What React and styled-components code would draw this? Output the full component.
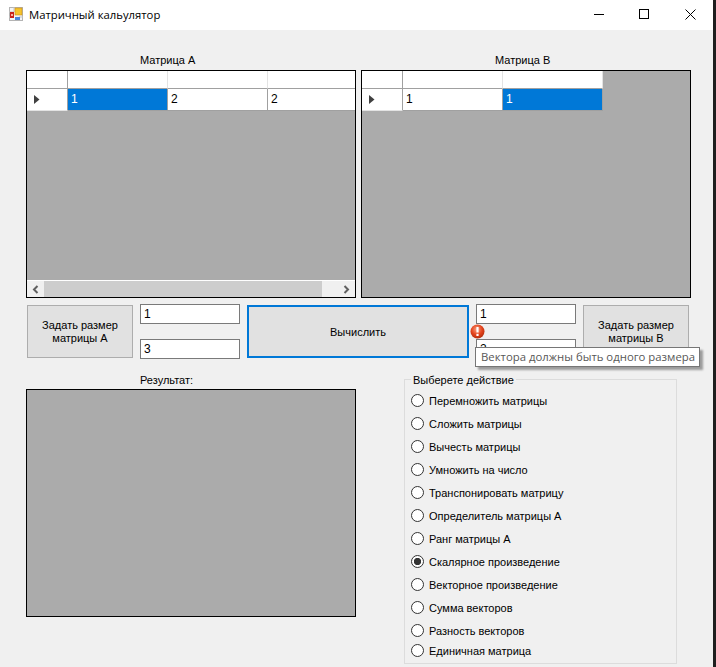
import React from "react";
import styled, { createGlobalStyle } from "styled-components";

const GlobalStyle = createGlobalStyle`
  html, body {
    margin: 0;
    padding: 0;
    background: #1f1f1f;
  }
  * {
    box-sizing: border-box;
  }
`;

const Frame = styled.div`
  width: 713px;
  height: 667px;
  overflow: hidden;
  background: #f0f0f0;
  color: #000;
  font-family: "Liberation Sans", Arial, sans-serif;
  font-size: 11px;
`;

const TitleBar = styled.div`
  height: 30px;
  background: #fff;
  display: flex;
  align-items: center;
  padding: 0 0 2px 9px;
`;

const TitleText = styled.div`
  margin-left: 6px;
  padding-top: 1px;
  font-family: "Open Sans", sans-serif;
  font-size: 11.3px;
  white-space: nowrap;
`;

const WindowControls = styled.div`
  margin-left: auto;
  display: flex;
`;

const WindowControl = styled.div`
  width: ${(p) => (p.$close ? 46 : 45)}px;
  height: 28px;
  padding-left: ${(p) => (p.$close ? 1 : 0)}px;
  display: flex;
  align-items: center;
  justify-content: center;
`;

const Client = styled.div`
  padding: 23px 0 0 26px;
`;

const GridsRow = styled.div`
  display: flex;
  gap: 5px;
`;

const Caption = styled.div`
  height: 14px;
  line-height: 14px;
  margin-left: ${(p) => p.$offset}px;
  margin-bottom: ${(p) => p.$gap}px;
  white-space: nowrap;
`;

const GridPanel = styled.div`
  width: 330px;
  height: 228px;
  background: #ababab;
  border: 1px solid #000;
  display: flex;
  flex-direction: column;
  overflow: hidden;
`;

const HeaderRow = styled.div`
  display: flex;
  flex: none;
  height: 18px;
`;

const DataRow = styled.div`
  display: flex;
  flex: none;
  height: 22px;
`;

const CornerCell = styled.div`
  flex: none;
  width: 41px;
  background: #fff;
  border-right: 1px solid #a0a0a0;
  border-bottom: 1px solid #a0a0a0;
`;

const HeaderCell = styled.div`
  flex: none;
  width: 100px;
  background: #fff;
  border-right: 1px solid #e3e3e3;
  border-bottom: 1px solid #a0a0a0;
`;

const RowHeader = styled.div`
  flex: none;
  width: 41px;
  background: #fff;
  border-right: 1px solid #a0a0a0;
  border-bottom: 1px solid #e3e3e3;
  display: flex;
  align-items: center;
  padding-left: 7px;
`;

const Cell = styled.div`
  flex: none;
  width: 100px;
  background: ${(p) => (p.$selected ? "#0078d7" : "#fff")};
  color: ${(p) => (p.$selected ? "#fff" : "#000")};
  border-right: 1px solid #a0a0a0;
  border-bottom: 1px solid #a0a0a0;
  font-size: 12px;
  line-height: 21px;
  padding-left: 3px;
`;

const GridBody = styled.div`
  flex: 1;
`;

const ScrollBar = styled.div`
  flex: none;
  height: 17px;
  border-top: 1px solid #fff;
  background: #f0f0f0;
  display: flex;
  align-items: center;
`;

const ScrollArrow = styled.div`
  flex: none;
  width: 17px;
  height: 16px;
  display: flex;
  align-items: center;
  justify-content: center;
`;

const ScrollThumb = styled.div`
  flex: 1;
  height: 16px;
  background: #cdcdcd;
  margin-right: ${(p) => p.$trail}px;
`;

const ControlsRow = styled.div`
  display: flex;
  gap: 7px;
  margin-top: 6px;
  height: 55px;
`;

const SizeButton = styled.button`
  width: 106px;
  height: 53px;
  margin: 1px 0 0 ${(p) => (p.$first ? 1 : 0)}px;
  padding: 0;
  background: #e1e1e1;
  border: 1px solid #adadad;
  border-radius: 0;
  font: inherit;
  color: #000;
  line-height: 13px;
`;

const RunButton = styled.button`
  width: 222px;
  height: 53px;
  margin-top: 1px;
  padding: 0;
  background: #e1e1e1;
  border: 2px solid #0078d7;
  border-radius: 0;
  font: inherit;
  color: #000;
`;

const InputStack = styled.div`
  position: relative;
  width: 100px;
  display: flex;
  flex-direction: column;
  justify-content: space-between;
`;

const SizeInput = styled.input`
  width: 100px;
  height: 20px;
  padding: 0 0 0 3px;
  background: #fff;
  border: 1px solid #7a7a7a;
  border-radius: 0;
  outline: none;
  font-family: inherit;
  font-size: 12px;
  color: #000;
`;

const ErrorMark = styled.svg`
  position: absolute;
  left: -6px;
  top: 20px;
`;

const Tooltip = styled.div`
  position: absolute;
  left: -1px;
  top: 43px;
  width: 225px;
  height: 20px;
  background: #fff;
  border: 1px solid #767676;
  box-shadow: 3px 3px 2px rgba(0, 0, 0, 0.35);
  color: #575757;
  font-family: "Open Sans", sans-serif;
  font-size: 11.35px;
  line-height: 18px;
  padding-left: 5px;
  white-space: nowrap;
`;

const BottomRow = styled.div`
  display: flex;
  margin-top: 14px;
  align-items: flex-start;
`;

const ResultPanel = styled.div`
  width: 330px;
  height: 228px;
  background: #ababab;
  border: 1px solid #000;
`;

const ActionGroup = styled.fieldset`
  width: 273px;
  height: 291px;
  margin: 0 0 0 48px;
  padding: 3px 0 0 6px;
  border: 1px solid #dcdcdc;
`;

const GroupLegend = styled.legend`
  padding: 0 2px;
  margin: 0;
  height: 13px;
  line-height: 14px;
`;

const RadioRow = styled.label`
  display: flex;
  align-items: center;
  gap: 5px;
  height: ${(p) => (p.$short ? 17 : 23)}px;
  white-space: nowrap;
`;

const RadioInput = styled.input`
  appearance: none;
  flex: none;
  width: 13px;
  height: 13px;
  margin: 0;
  background: #fff;
  border: 1px solid #333;
  border-radius: 50%;
  &:checked {
    background: radial-gradient(circle, #333 0 3.4px, #fff 3.9px);
  }
`;

const actions = [
  "Перемножить матрицы",
  "Сложить матрицы",
  "Вычесть матрицы",
  "Умножить на число",
  "Транспонировать матрицу",
  "Определитель матрицы А",
  "Ранг матрицы А",
  "Скалярное произведение",
  "Векторное произведение",
  "Сумма векторов",
  "Разность векторов",
  "Единичная матрица",
];

const AppIcon = () => (
  <svg width="14" height="14" viewBox="0 0 14 14">
    <rect x="0.5" y="0.5" width="13" height="13" fill="#f4f4f4" stroke="#b4b4b4" />
    <path d="M0 5h5M5 0v5M0 10h2M10 10h4" stroke="#c4c4c4" />
    <rect x="1" y="5" width="4" height="6" fill="#c8231c" />
    <rect x="2" y="7" width="2" height="2" fill="#f6b0a0" />
    <rect x="6" y="1" width="7" height="7" fill="#f5c32c" stroke="#c98c14" strokeWidth="0.6" />
    <rect x="6" y="10" width="5" height="3" fill="#4a86dc" />
  </svg>
);

const RowPointer = () => (
  <svg width="6" height="9" viewBox="0 0 6 9">
    <path d="M0 0l5.5 4.5L0 9z" fill="#404040" />
  </svg>
);

const Chevron = ({ flip }) => (
  <svg width="7" height="9" viewBox="0 0 7 9">
    <path
      d={flip ? "M1.5 1l3.5 3.5L1.5 8" : "M5.5 1L2 4.5 5.5 8"}
      fill="none"
      stroke="#606060"
      strokeWidth="2"
    />
  </svg>
);

const DataGrid = ({ values, selected, scroll }) => (
  <GridPanel>
    <HeaderRow>
      <CornerCell />
      {values.map((_, i) => (
        <HeaderCell key={i} />
      ))}
    </HeaderRow>
    <DataRow>
      <RowHeader>
        <RowPointer />
      </RowHeader>
      {values.map((v, i) => (
        <Cell key={i} $selected={i === selected}>
          {v}
        </Cell>
      ))}
    </DataRow>
    <GridBody />
    {scroll && (
      <ScrollBar>
        <ScrollArrow>
          <Chevron />
        </ScrollArrow>
        <ScrollThumb $trail={16} />
        <ScrollArrow>
          <Chevron flip />
        </ScrollArrow>
      </ScrollBar>
    )}
  </GridPanel>
);

const App = () => {
  return (
    <Frame>
      <GlobalStyle />
      <TitleBar>
        <AppIcon />
        <TitleText>Матричный кальулятор</TitleText>
        <WindowControls>
          <WindowControl>
            <svg width="11" height="11" viewBox="0 0 11 11">
              <path d="M0 5.5h10" stroke="#000" />
            </svg>
          </WindowControl>
          <WindowControl>
            <svg width="11" height="11" viewBox="0 0 11 11">
              <rect x="0.5" y="0.5" width="9" height="9" fill="none" stroke="#000" />
            </svg>
          </WindowControl>
          <WindowControl $close>
            <svg width="11" height="11" viewBox="0 0 11 11">
              <path d="M0.5 0.5l10 10M10.5 0.5l-10 10" stroke="#000" />
            </svg>
          </WindowControl>
        </WindowControls>
      </TitleBar>
      <Client>
        <GridsRow>
          <div>
            <Caption $offset={114} $gap={3}>Матрица А</Caption>
            <DataGrid values={["1", "2", "2"]} selected={0} scroll />
          </div>
          <div>
            <Caption $offset={134} $gap={3}>Матрица В</Caption>
            <DataGrid values={["1", "1"]} selected={1} />
          </div>
        </GridsRow>
        <ControlsRow>
          <SizeButton $first>
            Задать размер
            <br />
            матрицы А
          </SizeButton>
          <InputStack>
            <SizeInput defaultValue="1" />
            <SizeInput defaultValue="3" />
          </InputStack>
          <RunButton>Вычислить</RunButton>
          <InputStack>
            <SizeInput defaultValue="1" />
            <SizeInput defaultValue="2" />
            <ErrorMark width="15" height="15" viewBox="0 0 15 15">
              <defs>
                <radialGradient id="err" cx="45%" cy="35%" r="70%">
                  <stop offset="0%" stopColor="#f8a284" />
                  <stop offset="55%" stopColor="#e4431c" />
                  <stop offset="100%" stopColor="#a92a0c" />
                </radialGradient>
              </defs>
              <circle cx="7.5" cy="7.5" r="7" fill="url(#err)" />
              <path d="M7.5 3v5.5" stroke="#fff" strokeWidth="2.2" />
              <rect x="6.4" y="9.8" width="2.2" height="2.2" fill="#fff" />
            </ErrorMark>
            <Tooltip>Вектора должны быть одного размера</Tooltip>
          </InputStack>
          <SizeButton>
            Задать размер
            <br />
            матрицы В
          </SizeButton>
        </ControlsRow>
        <BottomRow>
          <div>
            <Caption $offset={114} $gap={2}>Результат:</Caption>
            <ResultPanel />
          </div>
          <ActionGroup>
            <GroupLegend>Выберете действие</GroupLegend>
            {actions.map((a, i) => (
              <RadioRow key={a} $short={i === actions.length - 1}>
                <RadioInput type="radio" name="action" defaultChecked={i === 7} />
                {a}
              </RadioRow>
            ))}
          </ActionGroup>
        </BottomRow>
      </Client>
    </Frame>
  );
};

export default App;
